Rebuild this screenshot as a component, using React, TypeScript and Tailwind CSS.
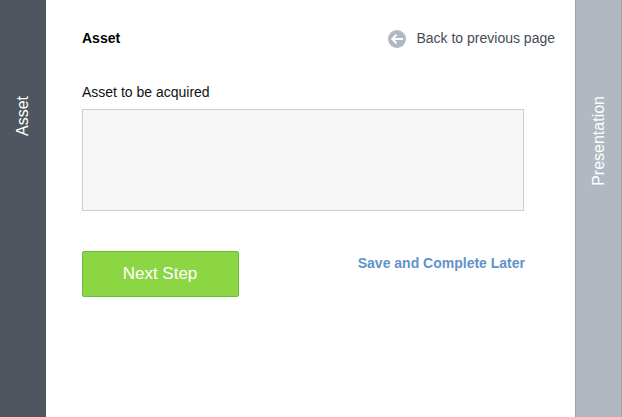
function Rail({ label, className }: { label: string; className: string }) {
  return (
    <aside className={`flex shrink-0 items-start justify-center text-[16px] leading-[18px] text-white ${className}`}>
      <span className="rotate-180 [writing-mode:vertical-rl]">{label}</span>
    </aside>
  );
}

export default function App() {
  return (
    <div className="flex h-[417px] w-[622px] overflow-hidden bg-white font-['Liberation_Sans',Arial,sans-serif] text-[14px] leading-4 text-[#111]">
      <Rail label="Asset" className="w-[46px] bg-[#4f565f] pt-24" />
      <main className="flex-1 pl-9 pt-[30px]">
        <header className="flex h-[18px] w-[473px] items-start justify-between">
          <h1 className="font-bold text-black">Asset</h1>
          <a className="flex items-start gap-[10px] text-[#454b58]">
            <svg width="18" height="18" viewBox="0 0 18 18" fill="none">
              <circle cx="9" cy="9" r="9" fill="#b1b8c3" />
              <path d="M15 9H4.5M8.5 4.8L4.3 9l4.2 4.2" stroke="white" strokeWidth="2" />
            </svg>
            Back to previous page
          </a>
        </header>
        <label className="mt-9 block">
          Asset to be acquired
          <textarea className="mt-[9px] block h-[102px] w-[442px] resize-none border border-[#ccc] bg-[#f7f7f7]" />
        </label>
        <div className="mt-10 flex w-[443px] items-start justify-between">
          <button className="h-[46px] w-[157px] rounded-[2px] border border-[#68bd39] bg-[#8bd642] pr-px text-[17px] text-white">Next Step</button>
          <a className="mt-1 font-bold text-[#5f93c8]">Save and Complete Later</a>
        </div>
      </main>
      <Rail label="Presentation" className="w-[47px] border-x border-[#9ba2aa] bg-[#b1b8c2] pt-24" />
    </div>
  );
}
